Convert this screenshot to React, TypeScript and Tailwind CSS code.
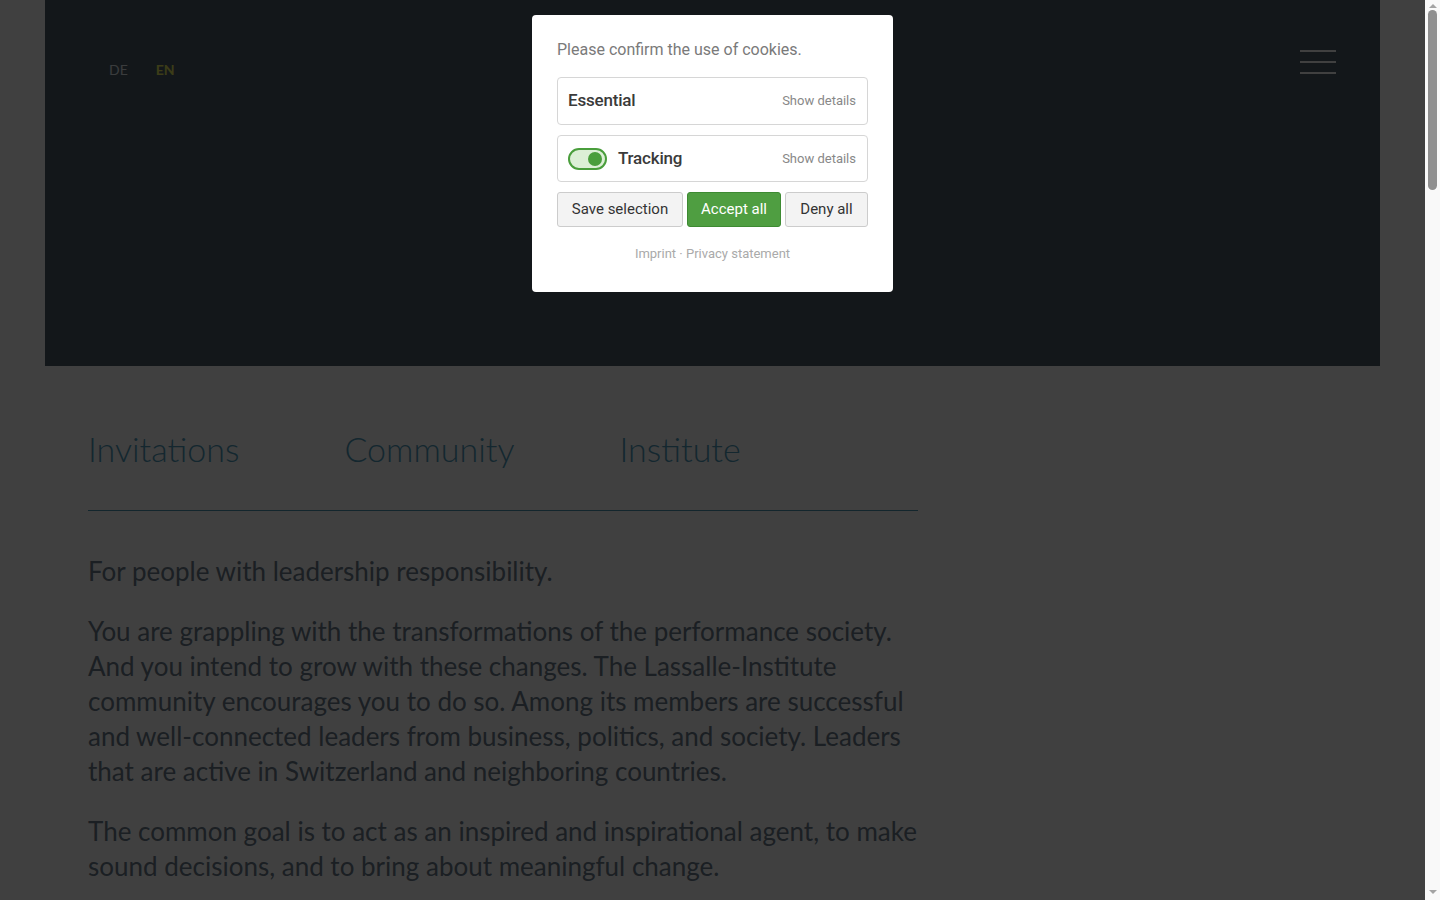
import { useState } from "react";

const tabs = ["Invitations", "Community", "Institute"];

const paragraphs = [
  "You are grappling with the transformations of the performance society. And you intend to grow with these changes. The Lassalle-Institute community encourages you to do so. Among its members are successful and well-connected leaders from business, politics, and society. Leaders that are active in Switzerland and neighboring countries.",
  "The common goal is to act as an inspired and inspirational agent, to make sound decisions, and to bring about meaningful change.",
];

function Toggle({ on, onChange }: { on: boolean; onChange: () => void }) {
  return (
    <button
      onClick={onChange}
      className={`relative h-[22px] w-[39px] rounded-full border-2 ${
        on ? "border-[#4a9e3c] bg-[#dcefd6]" : "border-[#bbb] bg-[#eee]"
      }`}
    >
      <span
        className={`absolute top-1/2 h-[14px] w-[14px] -translate-y-1/2 rounded-full ${
          on ? "right-[3px] bg-[#4a9e3c]" : "left-[3px] bg-[#bbb]"
        }`}
      />
    </button>
  );
}

function CookieBox() {
  const [tracking, setTracking] = useState(true);
  return (
    <div className="fixed inset-y-0 left-0 right-[15px] z-50 flex justify-center pt-[15px] font-['Roboto',sans-serif]">
      <div className="h-fit w-[361px] rounded-[4px] bg-white px-[25px] pt-[25px] pb-[28px]">
        <p className="text-[16px] leading-[20px] text-[#7a7a7a]">Please confirm the use of cookies.</p>

        <div className="mt-[17px] flex h-[48px] items-center justify-between rounded-[4px] border border-[#d6d6d6] pl-[10px] pr-[11px]">
          <span className="text-[17px] font-medium tracking-[-0.2px] text-[#3a3a3a]">Essential</span>
          <span className="text-[13px] text-[#888]">Show details</span>
        </div>

        <div className="mt-[10px] flex h-[47px] items-center justify-between rounded-[4px] border border-[#d6d6d6] pl-[10px] pr-[11px]">
          <div className="flex items-center gap-[11px]">
            <Toggle on={tracking} onChange={() => setTracking(!tracking)} />
            <span className="text-[17px] font-medium tracking-[-0.2px] text-[#3a3a3a]">Tracking</span>
          </div>
          <span className="text-[13px] text-[#888]">Show details</span>
        </div>

        <div className="mt-[10px] flex gap-[4px] text-[15px]">
          <button className="h-[35px] w-[126px] rounded-[3px] border border-[#ccc] bg-[#f3f3f3] text-[#333]">
            Save selection
          </button>
          <button className="h-[35px] w-[94px] rounded-[3px] border border-[#3d8a32] bg-[#4f9e41] text-white">
            Accept all
          </button>
          <button className="h-[35px] flex-1 rounded-[3px] border border-[#ccc] bg-[#f3f3f3] text-[#333]">
            Deny all
          </button>
        </div>

        <p className="mt-[17px] text-center text-[13px] leading-[20px] text-[#aaa]">
          <a>Imprint</a> · <a>Privacy statement</a>
        </p>
      </div>
    </div>
  );
}

// browser scrollbar as seen in the screenshot
function Scrollbar() {
  return (
    <div className="fixed inset-y-0 right-0 z-50 flex w-[15px] flex-col items-center bg-[#f9f9f9]">
      <span className="mt-[4px] h-0 w-0 border-x-[4px] border-b-[4px] border-x-transparent border-b-[#a3a3a3]" />
      <span className="mt-[2px] h-[180px] w-[9px] rounded-full bg-[#8f8f8f]" />
      <span className="mt-auto mb-[6px] h-0 w-0 border-x-[4px] border-t-[4px] border-x-transparent border-t-[#a3a3a3]" />
    </div>
  );
}

export default function App() {
  const [active, setActive] = useState(0);
  return (
    <div className="min-h-[4400px] bg-white pr-[15px] font-['Lato',sans-serif]">
      <div className="mx-[45px]">
        {/* Hero */}
        <header className="flex h-[366px] items-start justify-between bg-[#4b5c68] pl-[64px] pr-[44px]">
          <div className="mt-[59px] flex gap-[28px] text-[14px]">
            <a className="text-[#e6eef2]">DE</a>
            <a className="font-bold text-[#eef060]">EN</a>
          </div>
          <button className="mt-[50px] flex w-[36px] flex-col gap-[9px]">
            <span className="h-[2px] w-full bg-white" />
            <span className="h-[2px] w-full bg-white" />
            <span className="h-[2px] w-full bg-white" />
          </button>
        </header>

        {/* Content */}
        <main className="w-[873px] pl-[43px] pt-[63px]">
          <nav className="flex gap-[105px] border-b border-[#4c96b4] pb-[41px]">
            {tabs.map((t, i) => (
              <button
                key={t}
                onClick={() => setActive(i)}
                className={`text-[34px] font-light leading-[40px] ${i === active ? "text-[#4f9cbc]" : "text-[#4f9cbc]"}`}
              >
                {t}
              </button>
            ))}
          </nav>

          <div className="pt-[43px] text-[26px] leading-[35px] text-[#6c7d8c]">
            <p>For people with leadership responsibility.</p>
            {paragraphs.map((p, i) => (
              <p key={i} className="mt-[25px]">
                {p}
              </p>
            ))}
          </div>
        </main>
      </div>

      <div className="fixed inset-0 z-40 bg-black/75" />
      <CookieBox />
      <Scrollbar />
    </div>
  );
}
